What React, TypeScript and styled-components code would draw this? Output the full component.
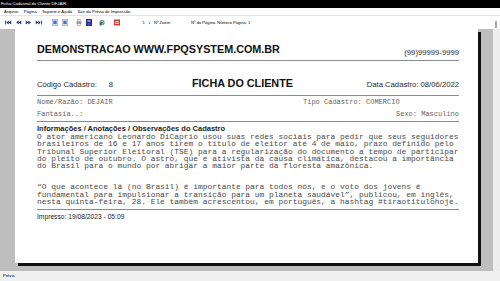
import React from "react";
import styled, { createGlobalStyle } from "styled-components";

const GlobalStyle = createGlobalStyle`
  html, body { margin: 0; padding: 0; width: 500px; height: 281px; overflow: hidden; background: #fff; }
  #root { width: 500px; height: 281px; }
  * { box-sizing: border-box; }
`;

const Window = styled.div`
  width: 500px;
  height: 281px;
  display: flex;
  flex-direction: column;
  font-family: "Liberation Sans", Arial, sans-serif;
  background: #fff;
  color: #000;
`;

const TitleBar = styled.div`
  flex: none;
  height: 8px;
  background: #000;
  color: #fff;
  font-size: 4.2px;
  line-height: 8px;
  padding-left: 1px;
  white-space: nowrap;
`;

const MenuBar = styled.div`
  flex: none;
  height: 8px;
  display: flex;
  align-items: center;
  gap: 5.5px;
  padding-left: 4px;
  font-size: 4.2px;
  border-bottom: 1px solid #e4e4e4;
  white-space: nowrap;
`;

const MenuItem = styled.span``;

const ToolBar = styled.div`
  flex: none;
  height: 13px;
  display: flex;
  align-items: center;
  padding-left: 3px;
  position: relative;
  font-size: 4.1px;
  white-space: nowrap;
`;

const ToolButton = styled.div`
  width: 10px;
  height: 10px;
  display: flex;
  align-items: center;
  justify-content: center;
  flex: none;
`;

const Spacer = styled.div<{ $w: number }>`
  width: ${(p) => p.$w}px;
  flex: none;
`;

const Combo = styled.div`
  width: 11px;
  height: 7px;
  display: flex;
  align-items: center;
  justify-content: space-between;
  padding: 0 1px 0 1.5px;
  flex: none;
`;

const Chevron = styled.span`
  color: #555;
  font-size: 3.6px;
`;

const ToolLabel = styled.span<{ $ml: number }>`
  margin-left: ${(p) => p.$ml}px;
  color: #000;
`;

const Gripper = styled.div`
  position: absolute;
  right: 3px;
  top: 5px;
  width: 2px;
  height: 7px;
  background: #a8a8a8;
`;

const Body = styled.div`
  flex: 1;
  display: flex;
  min-height: 0;
`;

const Viewport = styled.div`
  flex: 1;
  background: #bebebe;
  padding-left: 15px;
  overflow: hidden;
`;

const VScroll = styled.div`
  flex: none;
  width: 7px;
  background: #ededed;
`;

const Page = styled.div`
  width: 463px;
  height: 234px;
  background: #fff;
  box-shadow: 3px 3px 0 #111;
  padding: 0 19px 0 22px;
`;

const HeadRow = styled.div`
  height: 32px;
  display: flex;
  justify-content: space-between;
  align-items: flex-end;
  padding-bottom: 3.5px;
  border-bottom: 1px solid #8a8a8a;
`;

const BigTitle = styled.div<{ $mb?: number }>`
  font-size: 10.8px;
  line-height: 12px;
  font-weight: bold;
  color: #111;
  margin-bottom: ${(p) => p.$mb ?? 0}px;
  white-space: nowrap;
`;

const SmallText = styled.span<{ $ml?: number }>`
  font-size: 7.7px;
  line-height: 8px;
  color: #2a2a2a;
  margin-left: ${(p) => p.$ml ?? 0}px;
  white-space: nowrap;
`;

const InfoRow = styled.div`
  height: 35px;
  display: grid;
  grid-template-columns: 155px auto 1fr;
  align-items: baseline;
  padding-top: 11.8px;
  border-bottom: 1px solid #8a8a8a;
`;

const Cell = styled.div<{ $align?: string }>`
  justify-self: ${(p) => p.$align ?? "start"};
  white-space: nowrap;
`;

const FieldGrid = styled.div`
  height: 26px;
  display: grid;
  grid-template-columns: 266px 1fr;
  grid-auto-rows: 11.5px;
  padding-top: 1px;
  border-bottom: 1px solid #8a8a8a;
`;

const Field = styled.div<{ $align?: string }>`
  font-family: "Liberation Mono", "Courier New", monospace;
  font-size: 7px;
  line-height: 11.5px;
  color: #666;
  justify-self: ${(p) => p.$align ?? "start"};
  white-space: pre;
`;

const Notes = styled.div`
  padding-top: 3px;
  padding-bottom: 3.5px;
  border-bottom: 1px solid #8a8a8a;
`;

const NotesTitle = styled.div`
  font-size: 7.5px;
  line-height: 8px;
  font-weight: bold;
  color: #222;
  white-space: nowrap;
`;

const Paragraph = styled.div<{ $mt?: number }>`
  font-family: "Liberation Mono", "Courier New", monospace;
  font-size: 7.9px;
  line-height: 7.3px;
  color: #4a4a4a;
  white-space: pre;
  margin-top: ${(p) => p.$mt ?? 0}px;
`;

const Printed = styled.div`
  padding-top: 3px;
  font-size: 6.7px;
  line-height: 8px;
  color: #222;
`;

const StatusBar = styled.div`
  flex: none;
  height: 10px;
  background: #f0f0f0;
  font-size: 4.1px;
  line-height: 10px;
  padding-left: 3px;
  position: relative;
`;

const navy = "#23306b";

const NavIcon = ({ dir, bar }: { dir: "l" | "r"; bar?: boolean }) => (
  <svg width="7" height="5" viewBox="0 0 14 10">
    {dir === "l" ? (
      <g fill={navy}>
        {bar && <rect x="0" y="1" width="1.6" height="8" />}
        <polygon points="2.5,5 7.5,1 7.5,9" />
        <polygon points="7.5,5 12.5,1 12.5,9" />
      </g>
    ) : (
      <g fill={navy}>
        <polygon points="1.5,1 6.5,5 1.5,9" />
        <polygon points="6.5,1 11.5,5 6.5,9" />
        {bar && <rect x="12.4" y="1" width="1.6" height="8" />}
      </g>
    )}
  </svg>
);

const DocIcon = () => (
  <svg width="6" height="7" viewBox="0 0 12 14">
    <rect x="0.5" y="0.5" width="11" height="13" fill="#fff" stroke="#7d8aa8" />
    <rect x="2.5" y="3" width="7" height="7" fill="#4d73c9" />
    <rect x="2.5" y="11" width="7" height="1" fill="#9aa" />
  </svg>
);

const PrinterIcon = () => (
  <svg width="6" height="7" viewBox="0 0 12 14">
    <rect x="3" y="1" width="6" height="4" fill="#e8e8e8" stroke="#888" />
    <rect x="1" y="5" width="10" height="5" fill="#9a9a9a" />
    <rect x="3" y="9" width="6" height="4" fill="#f4f4f4" stroke="#888" />
  </svg>
);

const BlueSquareIcon = () => (
  <svg width="6" height="7" viewBox="0 0 12 14">
    <rect x="0" y="0" width="12" height="14" fill="#2d2d8c" />
    <rect x="3" y="2" width="6" height="4" fill="#8f8fd8" />
    <rect x="3" y="8" width="6" height="4" fill="#5151b0" />
  </svg>
);

const GreenIcon = () => (
  <svg width="6" height="7" viewBox="0 0 12 14">
    <circle cx="6" cy="7" r="5" fill="#3a7d5a" />
    <path d="M3 7 A3 3 0 1 1 6 10" stroke="#cfe7d9" strokeWidth="1.6" fill="none" />
    <rect x="1" y="9" width="4" height="4" fill="#6a6a6a" />
  </svg>
);

const RedIcon = () => (
  <svg width="6" height="7" viewBox="0 0 12 14">
    <rect x="0" y="1" width="12" height="12" fill="#d23a3a" />
    <rect x="3" y="4" width="6" height="6" fill="#fff" />
    <rect x="4.5" y="5.5" width="3" height="3" fill="#d23a3a" />
  </svg>
);

const para1 = [
  "O ator americano Leonardo DiCaprio usou suas redes sociais para pedir que seus seguidores",
  "brasileiros de 16 e 17 anos tirem o título de eleitor até 4 de maio, prazo definido pelo",
  "Tribunal Superior Eleitoral (TSE) para a regularização do documento a tempo de participar",
  "do pleito de outubro. O astro, que é ativista da causa climática, destacou a importância",
  "do Brasil para o mundo por abrigar a maior parte da floresta amazônica.",
].join("\n");

const para2 = [
  "“O que acontece lá (no Brasil) é importante para todos nós, e o voto dos jovens é",
  "fundamental para impulsionar a transição para um planeta saudável”, publicou, em inglês,",
  "nesta quinta-feira, 28. Ele também acrescentou, em português, a hashtag #tiraotitulohoje.",
].join("\n");

export default function App() {
  return (
    <>
      <GlobalStyle />
      <Window>
        <TitleBar>Ficha Cadastral do Cliente DEJAIR</TitleBar>
        <MenuBar>
          <MenuItem>Arquivo</MenuItem>
          <MenuItem>Página</MenuItem>
          <MenuItem>Suporte e Ajuda</MenuItem>
          <MenuItem>Sair da Prévia de Impressão</MenuItem>
        </MenuBar>
        <ToolBar>
          <ToolButton><NavIcon dir="l" bar /></ToolButton>
          <ToolButton><NavIcon dir="l" /></ToolButton>
          <ToolButton><NavIcon dir="r" /></ToolButton>
          <ToolButton><NavIcon dir="r" bar /></ToolButton>
          <Spacer $w={6.5} />
          <ToolButton><DocIcon /></ToolButton>
          <ToolButton><DocIcon /></ToolButton>
          <Spacer $w={4.5} />
          <ToolButton><PrinterIcon /></ToolButton>
          <ToolButton><BlueSquareIcon /></ToolButton>
          <Spacer $w={2.5} />
          <ToolButton><GreenIcon /></ToolButton>
          <Spacer $w={5} />
          <ToolButton><RedIcon /></ToolButton>
          <Spacer $w={19.5} />
          <Combo>
            <span>1</span>
            <Chevron>∨</Chevron>
          </Combo>
          <ToolLabel $ml={2}>Nº Zoom</ToolLabel>
          <ToolLabel $ml={21}>Nº da Página: Número Página: 1</ToolLabel>
          <Gripper />
        </ToolBar>
        <Body>
          <Viewport>
            <Page>
              <HeadRow>
                <BigTitle $mb={1.5}>DEMONSTRACAO WWW.FPQSYSTEM.COM.BR</BigTitle>
                <SmallText>(99)99999-9999</SmallText>
              </HeadRow>
              <InfoRow>
                <Cell>
                  <SmallText>Código Cadastro:</SmallText>
                  <SmallText $ml={12}>8</SmallText>
                </Cell>
                <Cell>
                  <BigTitle>FICHA DO CLIENTE</BigTitle>
                </Cell>
                <Cell $align="end">
                  <SmallText>Data Cadastro: 08/06/2022</SmallText>
                </Cell>
              </InfoRow>
              <FieldGrid>
                <Field>Nome/Razão: DEJAIR</Field>
                <Field>Tipo Cadastro: COMERCIO</Field>
                <Field>Fantasia..:</Field>
                <Field $align="end">Sexo: Masculino</Field>
              </FieldGrid>
              <Notes>
                <NotesTitle>Informações / Anotações / Observações do Cadastro</NotesTitle>
                <Paragraph>{para1}</Paragraph>
                <Paragraph $mt={14}>{para2}</Paragraph>
              </Notes>
              <Printed>Impresso: 19/08/2023 - 05:09</Printed>
            </Page>
          </Viewport>
          <VScroll />
        </Body>
        <StatusBar>Prévia</StatusBar>
      </Window>
    </>
  );
}
